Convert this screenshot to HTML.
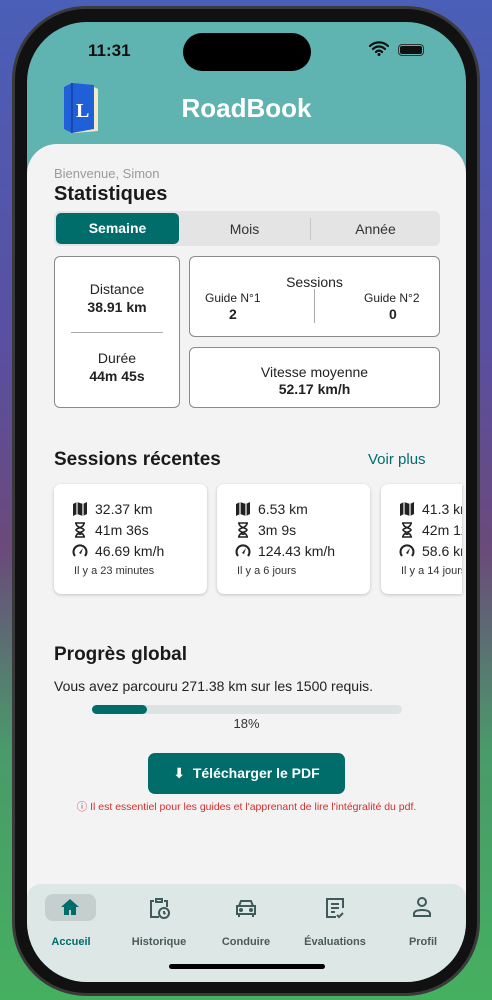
<!DOCTYPE html><html><head><style>
*{margin:0;padding:0;box-sizing:border-box}
body{width:492px;height:1000px;overflow:hidden;font-family:"Liberation Sans","DejaVu Sans",sans-serif;background:linear-gradient(180deg,#4a5fb8 0%,#5a4fa0 35%,#6a4a7a 55%,#4a9a6a 75%,#45b060 100%);position:relative}
.phone{position:absolute;left:12px;top:6px;width:468px;height:990px;border-radius:74px;background:#111;border:3px solid #3a3a3a}
.screen{position:absolute;left:27px;top:22px;width:439px;height:960px;border-radius:60px;overflow:hidden;background:#5fb3b1}
.abs{position:absolute}
.card{position:absolute;background:#fff;border:1px solid #8a8a8a;border-radius:6px}
.t{position:absolute;white-space:nowrap}
.rc{position:absolute;background:#fff;border-radius:7px;box-shadow:0 1px 3px rgba(0,0,0,.2);top:462px;height:110px;width:153px;font-size:14px;color:#222}
.rc .l{position:absolute;left:18px;display:flex;align-items:center;gap:7px;white-space:nowrap}
.rc svg{flex:none}
.nav{position:absolute;left:0;top:862px;width:439px;height:100px;background:#dde7e6;border-radius:14px 14px 0 0}
.ni{position:absolute;top:52px;font-size:11px;font-weight:bold;color:#4a5a5a;transform:translateX(-50%)}
</style></head><body>
<svg width="0" height="0" style="position:absolute"><defs>
<symbol id="map" viewBox="0 0 16 16"><path d="M1 3l4-2 6 2 4-2v12l-4 2-6-2-4 2z" fill="#222"/><path d="M5 1v12M11 3v12" stroke="#fff" stroke-width="1.2"/></symbol>
<symbol id="hg" viewBox="0 0 16 16"><path d="M3 1h10M3 15h10M4 1c0 5 8 5 8 7s-8 2-8 7M12 1c0 5-8 5-8 7s8 2 8 7" stroke="#222" stroke-width="1.6" fill="none"/><path d="M6 13l2-2 2 2z" fill="#222"/></symbol>
<symbol id="gg" viewBox="0 0 16 16"><path d="M3 13A6.5 6.5 0 1 1 13 13" stroke="#222" stroke-width="2" fill="none"/><path d="M7 10l4-5-2 6z" fill="#222"/></symbol>
</defs></svg>
<div class="phone"></div>
<div class="screen">
<div class="t" style="left:61px;top:19px;font-size:17px;font-weight:bold;color:#111">11:31</div>
<div class="abs" style="left:156px;top:11px;width:128px;height:38px;background:#000;border-radius:19px"></div>
<svg class="abs" style="left:342px;top:19px" width="20" height="15" viewBox="0 0 20 15"><path d="M1 5a13 13 0 0 1 18 0M4 8a8.5 8.5 0 0 1 12 0M7 11a4 4 0 0 1 6 0" stroke="#111" stroke-width="2.2" fill="none" stroke-linecap="round"/><circle cx="10" cy="13.5" r="1.5" fill="#111"/></svg>
<div class="abs" style="left:371px;top:22px;width:26px;height:12px;border:1.5px solid #333;border-radius:4px;padding:1px"><div style="width:100%;height:100%;background:#111;border-radius:2px"></div></div>
<svg class="abs" style="left:37px;top:61px" width="36" height="50" viewBox="0 0 36 50"><path d="M2 4 L26 2 L34 6 L34 48 L10 50 L2 46Z" fill="#f3e8c8"/><path d="M0 4 L8 0 L30 2 L30 46 L8 50 L0 46Z" fill="#1f5fd8"/><path d="M8 0 L8 50" stroke="#1848b0" stroke-width="2"/><text x="12" y="34" font-size="20" font-weight="bold" fill="#fff" font-family="Liberation Serif">L</text></svg>
<div class="t" style="left:0;width:439px;text-align:center;top:71px;font-size:26px;font-weight:bold;color:#fff">RoadBook</div>
<div class="abs" style="left:0;top:122px;width:439px;height:760px;background:#f3f3f3;border-radius:30px 30px 0 0"></div>
<div class="t" style="left:27px;top:144px;font-size:13px;color:#9a9a9a">Bienvenue, Simon</div>
<div class="t" style="left:27px;top:161px;font-size:20px;font-weight:bold;color:#1a1a1a">Statistiques</div>
<div class="abs" style="left:27px;top:189px;width:386px;height:35px;background:#e4e4e4;border-radius:6px"></div>
<div class="abs" style="left:29px;top:191px;width:123px;height:31px;background:#006d6b;border-radius:5px;color:#fff;font-weight:bold;font-size:14px;text-align:center;line-height:31px">Semaine</div>
<div class="t" style="left:152px;width:131px;text-align:center;top:199px;font-size:14px;color:#333">Mois</div>
<div class="abs" style="left:283px;top:196px;width:1px;height:22px;background:#c8c8c8"></div>
<div class="t" style="left:284px;width:129px;text-align:center;top:199px;font-size:14px;color:#333">Année</div>
<div class="card" style="left:27px;top:234px;width:126px;height:152px">
<div class="t" style="width:124px;text-align:center;top:24px;font-size:14px;color:#222">Distance</div>
<div class="t" style="width:124px;text-align:center;top:42px;font-size:14px;font-weight:bold;color:#222">38.91 km</div>
<div class="abs" style="left:16px;top:75px;width:92px;height:1px;background:#aaa"></div>
<div class="t" style="width:124px;text-align:center;top:93px;font-size:14px;color:#222">Durée</div>
<div class="t" style="width:124px;text-align:center;top:111px;font-size:14px;font-weight:bold;color:#222">44m 45s</div>
</div>
<div class="card" style="left:162px;top:234px;width:251px;height:81px">
<div class="t" style="width:249px;text-align:center;top:17px;font-size:14px;color:#222">Sessions</div>
<div class="t" style="left:15px;top:34px;font-size:12px;color:#222">Guide N°1</div>
<div class="t" style="left:39px;top:49px;font-size:14px;font-weight:bold;color:#222">2</div>
<div class="abs" style="left:124px;top:32px;width:1px;height:34px;background:#aaa"></div>
<div class="t" style="left:174px;top:34px;font-size:12px;color:#222">Guide N°2</div>
<div class="t" style="left:199px;top:49px;font-size:14px;font-weight:bold;color:#222">0</div>
</div>
<div class="card" style="left:162px;top:325px;width:251px;height:61px">
<div class="t" style="width:249px;text-align:center;top:16px;font-size:14px;color:#222">Vitesse moyenne</div>
<div class="t" style="width:249px;text-align:center;top:33px;font-size:14px;font-weight:bold;color:#222">52.17 km/h</div>
</div>
<div class="t" style="left:27px;top:427px;font-size:19px;font-weight:bold;color:#1a1a1a">Sessions récentes</div>
<div class="t" style="left:341px;top:429px;font-size:15px;color:#006d6b">Voir plus</div>
<div class="rc" style="left:27px"><div class="l" style="top:17px"><svg width="16" height="16"><use href="#map"/></svg>32.37 km</div><div class="l" style="top:38px"><svg width="16" height="16"><use href="#hg"/></svg>41m 36s</div><div class="l" style="top:59px"><svg width="16" height="16"><use href="#gg"/></svg>46.69 km/h</div><div class="t" style="left:20px;top:81px;font-size:11px;color:#333">Il y a 23 minutes</div></div>
<div class="rc" style="left:190px"><div class="l" style="top:17px"><svg width="16" height="16"><use href="#map"/></svg>6.53 km</div><div class="l" style="top:38px"><svg width="16" height="16"><use href="#hg"/></svg>3m 9s</div><div class="l" style="top:59px"><svg width="16" height="16"><use href="#gg"/></svg>124.43 km/h</div><div class="t" style="left:20px;top:81px;font-size:11px;color:#333">Il y a 6 jours</div></div>
<div class="rc" style="left:354px;overflow:hidden;width:81px;border-radius:7px 0 0 7px"><div class="l" style="top:17px"><svg width="16" height="16"><use href="#map"/></svg>41.3 km</div><div class="l" style="top:38px"><svg width="16" height="16"><use href="#hg"/></svg>42m 12s</div><div class="l" style="top:59px"><svg width="16" height="16"><use href="#gg"/></svg>58.6 km/h</div><div class="t" style="left:20px;top:81px;font-size:11px;color:#333">Il y a 14 jours</div></div>
<div class="t" style="left:27px;top:622px;font-size:19px;font-weight:bold;color:#1a1a1a">Progrès global</div>
<div class="t" style="left:27px;top:656px;font-size:14px;color:#222">Vous avez parcouru 271.38 km sur les 1500 requis.</div>
<div class="abs" style="left:65px;top:683px;width:310px;height:9px;background:#dce4e3;border-radius:5px"><div style="width:55px;height:9px;background:#006d6b;border-radius:5px"></div></div>
<div class="t" style="left:0;width:439px;text-align:center;top:694px;font-size:13px;color:#333">18%</div>
<div class="abs" style="left:121px;top:731px;width:197px;height:41px;background:#006d6b;border-radius:7px;color:#fff;font-weight:bold;font-size:14px;line-height:41px;text-align:center">⬇&nbsp;&nbsp;Télécharger le PDF</div>
<div class="t" style="left:0;width:439px;text-align:center;top:777px;font-size:10.5px;color:#d03030">ⓘ Il est essentiel pour les guides et l'apprenant de lire l'intégralité du pdf.</div>
<div class="nav">
<div class="abs" style="left:18px;top:10px;width:51px;height:27px;background:#c5cfce;border-radius:8px"></div>
<svg class="abs" style="left:33px;top:14px" width="20" height="18" viewBox="0 0 20 18"><path d="M10 1L1 9h3v8h5v-5h2v5h5V9h3z" fill="#006d6b"/></svg>
<svg class="abs" style="left:120px;top:12px" width="24" height="24" viewBox="0 0 24 24" fill="none" stroke="#3f5a5a" stroke-width="2"><path d="M9 3h6v3H9zM7 5H4v16h8"/><path d="M17 5h3v6"/><circle cx="17" cy="17" r="5"/><path d="M17 15v2l1.5 1"/></svg>
<svg class="abs" style="left:208px;top:14px" width="22" height="20" viewBox="0 0 22 20" fill="none" stroke="#3f5a5a" stroke-width="2"><path d="M4 8l2-5h10l2 5M2 8h18v8H2zM4 16v3M18 16v3"/><circle cx="6" cy="12" r="1" fill="#3f5a5a"/><circle cx="16" cy="12" r="1" fill="#3f5a5a"/></svg>
<svg class="abs" style="left:297px;top:12px" width="22" height="24" viewBox="0 0 22 24" fill="none" stroke="#3f5a5a" stroke-width="2"><path d="M12 21H3V3h16v9M7 8h8M7 12h8M7 16h4M13 19l2 2 4-4"/></svg>
<svg class="abs" style="left:384px;top:12px" width="22" height="22" viewBox="0 0 22 22" fill="none" stroke="#3f5a5a" stroke-width="2"><circle cx="11" cy="6" r="4"/><path d="M3 20v-2c0-3 4-4 8-4s8 1 8 4v2z"/></svg>
<div class="ni" style="left:44px;color:#006d6b">Accueil</div>
<div class="ni" style="left:132px">Historique</div>
<div class="ni" style="left:219px">Conduire</div>
<div class="ni" style="left:308px">Évaluations</div>
<div class="ni" style="left:396px">Profil</div>
<div class="abs" style="left:142px;top:80px;width:156px;height:5px;background:#000;border-radius:3px"></div>
</div>
</div>
</body></html>
